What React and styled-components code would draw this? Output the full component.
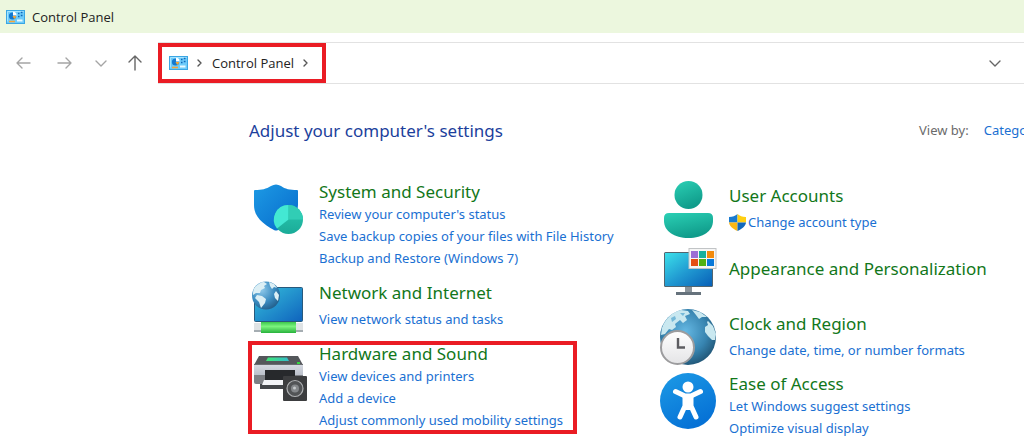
import { useState } from 'react'
import styled, { createGlobalStyle, css } from 'styled-components'

//Styles
const GlobalStyle = createGlobalStyle`
    body {
        margin: 0;
        background: #fff;
        color: #222;
        font-family: "Noto Sans", sans-serif;
        font-size: 13px;
        overflow: hidden;
    }

    * {
        box-sizing: border-box;
    }
`

const highlight = css`
    position: relative;

    &::after {
        content: "";
        position: absolute;
        border: 4px solid #ea1c24;
        pointer-events: none;
    }
`

const TitleBar = styled.header`
    display: flex;
    align-items: center;
    gap: 7px;
    height: 33px;
    padding-left: 6px;
    background: #ecf7de;
    font-family: "Open Sans", sans-serif;
`

const NavBar = styled.nav`
    display: flex;
    align-items: center;
    height: 42px;
    margin-top: 9px;
`

const NavButtons = styled.div`
    display: flex;
    flex-shrink: 0;
    align-items: center;
    gap: 22px;
    width: 158px;
    padding-left: 13px;
`

const NavButton = styled.button`
    display: flex;
    flex-shrink: 0;
    justify-content: center;
    width: ${({ $width }) => $width}px;
    padding: 0;
    border: none;
    background: none;
    color: ${({ $dark }) => ($dark ? '#666' : '#a5a5a5')};

    & > svg {
        flex-shrink: 0;
    }
`

const AddressBar = styled.div`
    display: flex;
    flex: 1;
    align-items: center;
    justify-content: space-between;
    height: 42px;
    padding-right: 21px;
    border: solid #e2e2e2;
    border-width: 1px 0 1px 1px;
`

const Breadcrumb = styled.div`
    ${highlight}
    display: flex;
    align-items: center;
    gap: 9px;
    height: 40px;
    padding: 0 17px 0 10px;
    color: #555;

    &::after {
        inset: 0 0 0 -1px;
    }
`

const Crumb = styled.button`
    padding: 0;
    border: none;
    background: none;
    color: #222;
    font: 13px "Open Sans", sans-serif;
`

const Main = styled.main`
    padding: 33px 0 0 249px;
`

const TopRow = styled.div`
    display: flex;
    align-items: center;
    justify-content: space-between;
    height: 26px;
    margin-right: -64px;
`

const Heading = styled.h1`
    margin: 0;
    color: #1c3f9c;
    font-size: 17px;
    font-weight: 400;
    white-space: nowrap;
`

const ViewBy = styled.div`
    display: flex;
    flex-shrink: 0;
    align-items: center;
    gap: 15px;
    width: 169px;
    color: #6b6b6b;
`

const ViewSelect = styled.select`
    appearance: none;
    padding: 0;
    border: none;
    background: none;
    color: #1a70d2;
    font: inherit;
`

const Columns = styled.div`
    display: grid;
    grid-template-columns: 410px 1fr;
    padding: 38px 0 4px 1px;
`

const Column = styled.div`
    display: flex;
    flex-direction: column;
    align-items: flex-start;
    gap: ${({ $gap }) => $gap}px;
`

const CategoryBox = styled.section`
    display: flex;
    align-items: ${({ $short }) => ($short ? 'center' : 'flex-start')};
    gap: 13px;

    & > svg {
        flex-shrink: 0;
        overflow: visible;
    }

    ${({ $highlighted }) => $highlighted && css`
        ${highlight}

        &::after {
            inset: -2px -14px -3px -2px;
        }
    `}
`

const CategoryTitle = styled.h2`
    margin: 0 0 ${({ $short }) => ($short ? 4 : 0)}px;
    font-size: 17px;
    font-weight: 400;
    line-height: 22px;
    white-space: nowrap;

    & > a {
        color: #12771a;
        text-decoration: none;
    }
`

const TaskList = styled.ul`
    min-height: 4px;
    margin: 0;
    padding: 0;
    list-style: none;
    line-height: 22px;
    white-space: nowrap;
`

const TaskLink = styled.a`
    display: flex;
    align-items: center;
    gap: 2px;
    color: #1a70d2;
    text-decoration: none;
`

//Icons
const PanelIcon = () => (
    <svg width="19" height="14" viewBox="0 0 19 14" aria-hidden="true">
        <rect x=".5" y=".5" width="18" height="13" fill="#6dcbfa" stroke="#3aa6e4" />
        <path d="M1.5 11.5V1.5h16" fill="none" stroke="#a6e4ff" />
        <circle cx="6.5" cy="6" r="3.6" fill="#1479cf" />
        <path d="M7 5.5V1.8a3.7 3.7 0 0 1 3.6 3.7z" fill="#fff" />
        <path d="M6.5 6h3.7a3.6 3.6 0 0 1-2 3z" fill="#f6a531" />
        <path d="M12 3.5h1.5M12 6.5h1.5M14.8 2.5h1.7M14.8 5.5h1.7" stroke="#1067b8" strokeWidth="1.4" />
        <path d="M3 11.5h6" stroke="#f4a63a" strokeWidth="1.5" />
        <path d="M11 10.5h5.5" stroke="#e9faff" strokeWidth="2" />
    </svg>
)

const Arrow = ({ d, width = 16, height = 16, stroke = 1.4 }) => (
    <svg width={width} height={height} viewBox={`0 0 ${width} ${height}`} fill="none" stroke="currentColor"
        strokeWidth={stroke} strokeLinecap="round" strokeLinejoin="round" aria-hidden="true">
        <path d={d} />
    </svg>
)

const Icon = ({ children }) => (
    <svg width="56" height="56" viewBox="0 0 56 56" aria-hidden="true">{children}</svg>
)

const SecurityIcon = () => (
    <Icon>
        <linearGradient id="shield" x1="0" y1="0" x2="1" y2="1">
            <stop offset="0" stopColor="#1d9ae4" />
            <stop offset="1" stopColor="#0669cb" />
        </linearGradient>
        <linearGradient id="pie" x1="0" y1="0" x2="0" y2="1">
            <stop offset="0" stopColor="#2bc9b0" />
            <stop offset="1" stopColor="#1aab98" />
        </linearGradient>
        <path d="M4 10q0-1 1-1c7 0 11-1 16-4q5-3 10 0c4 3 9 4 16 4q1 0 1 1v14c0 12-9 20-20 25q-2 1-4 0C13 43 4 36 4 24z" fill="url(#shield)" />
        <circle cx="38.500" cy="38.500" r="14.500" fill="url(#pie)" />
        <path d="M38.500 38.500V24a14.500 14.500 0 0 0-11.500 23.500z" fill="#43e8d3" />
        <path d="M38.500 38.500V24A14.500 14.500 0 0 1 53 38.500z" fill="#31cdb5" />
    </Icon>
)

const NetworkIcon = () => (
    <Icon>
        <linearGradient id="netScreen" x1="0" y1="0" x2="1" y2="1">
            <stop offset="0" stopColor="#36c0dc" />
            <stop offset="1" stopColor="#0f63bd" />
        </linearGradient>
        <radialGradient id="netGlobe" cx=".35" cy=".3" r=".75">
            <stop offset="0" stopColor="#8fc9ea" />
            <stop offset=".6" stopColor="#3a8bc0" />
            <stop offset="1" stopColor="#235f8b" />
        </radialGradient>
        <linearGradient id="cable" x1="0" y1="0" x2="0" y2="1">
            <stop offset="0" stopColor="#3cc84c" />
            <stop offset=".4" stopColor="#7cf47e" />
            <stop offset="1" stopColor="#28b23c" />
        </linearGradient>
        <g transform="translate(0 1)">
            <rect x="4.500" y="8.500" width="48" height="34" rx="1" fill="url(#netScreen)" stroke="#28597c" />
            <path d="M4 44h49v9H4z" fill="#dfe3e5" />
            <path d="M4 51h49v2H4z" fill="#a5adb2" />
            <path d="M11 43h35v11H11z" fill="url(#cable)" />
            <circle cx="16" cy="16.500" r="14" fill="url(#netGlobe)" />
            <path d="M5 8c3-3 6-5 9-5l3 2-3 2 1 2-4 2-1 3-4 0-3 2c0-3 0-5 2-8zM19 3l5 2 3 4-3-1-2 2-2-3zM7 16l5 1 4 3-1 4-4 5-2-6-4-4zM26 12l3 4-1 6-3-3-1-4z" fill="#dceff5" />
        </g>
    </Icon>
)

const HardwareIcon = () => (
    <Icon>
        <linearGradient id="printer" x1="0" y1="0" x2="0" y2="1">
            <stop offset="0" stopColor="#d8dce4" />
            <stop offset="1" stopColor="#a9aeba" />
        </linearGradient>
        <linearGradient id="scan" x1="0" y1="0" x2="1" y2="0">
            <stop offset="0" stopColor="#3ee874" />
            <stop offset="1" stopColor="#33bdcb" />
        </linearGradient>
        <g transform="translate(0 2)">
            <path d="M9 11h39l5 9H4z" fill="#54575b" />
            <path d="M18 12.500h19l2 3.500H16z" fill="url(#scan)" />
            <path d="M4 19h49v18H4z" fill="url(#printer)" />
            <path d="M4 30h49v7q0 2-2 2H6q-2 0-2-2z" fill="#7d8085" />
            <path d="M4 19.500h49" stroke="#696c71" />
            <path d="M47 17h3v2h-3z" fill="#35d742" />
            <path d="M15 25h30v14H15z" fill="#27292c" />
            <path d="M15 35h30v4H13z" fill="#eceef2" />
            <path d="M10 39h24v5H10z" fill="#43464a" />
            <path d="M14 35h22v5H12z" fill="#f2f4f7" />
            <rect x="33" y="31" width="24" height="25" rx="1" fill="#3c3d3f" />
            <circle cx="45" cy="43.500" r="8" fill="#525456" stroke="#aeb0b2" strokeWidth="1.200" />
            <circle cx="45" cy="43.500" r="4" fill="#85888b" />
            <circle cx="44.500" cy="43" r="1.500" fill="#c5c8ca" />
        </g>
    </Icon>
)

const UserIcon = () => (
    <Icon>
        <linearGradient id="user" x1="0" y1="0" x2=".4" y2="1">
            <stop offset="0" stopColor="#2bd0b5" />
            <stop offset="1" stopColor="#109c8b" />
        </linearGradient>
        <circle cx="28.500" cy="14" r="14" fill="url(#user)" />
        <path d="M9 32h39q5 0 5 5v3c0 10-10 17-24.500 17S4 50 4 40v-3q0-5 5-5z" fill="url(#user)" />
    </Icon>
)

const AppearanceIcon = () => (
    <Icon>
        <linearGradient id="screen" x1="0" y1="0" x2="1" y2="1">
            <stop offset="0" stopColor="#3be0ea" />
            <stop offset=".5" stopColor="#219bd2" />
            <stop offset="1" stopColor="#0860b8" />
        </linearGradient>
        <path d="M25 41h7v7h-7z" fill="#8b949b" />
        <path d="M16 47h25v3H16z" fill="#66727c" />
        <rect x="4" y="7" width="49" height="35" rx="1.500" fill="#52656f" />
        <rect x="5" y="8" width="47" height="33" fill="url(#screen)" />
        <rect x="29" y="3.500" width="27" height="20" fill="#f6f6f6" stroke="#c1c4c6" />
        <path d="M31 6h7v7h-7z" fill="#9b6ed4" />
        <path d="M39 6h7v7h-7z" fill="#16af9d" />
        <path d="M47 6h7v7h-7z" fill="#f28a0c" />
        <path d="M31 14h7v7h-7z" fill="#e44e14" />
        <path d="M39 14h7v7h-7z" fill="#50b112" />
        <path d="M47 14h7v7h-7z" fill="#0878d8" />
    </Icon>
)

const ClockIcon = () => (
    <Icon>
        <radialGradient id="earth" cx=".45" cy=".4" r=".65">
            <stop offset="0" stopColor="#65b8e3" />
            <stop offset=".6" stopColor="#3784b0" />
            <stop offset="1" stopColor="#1e506f" />
        </radialGradient>
        <linearGradient id="face" x1="0" y1="0" x2="0" y2="1">
            <stop offset="0" stopColor="#fff" />
            <stop offset="1" stopColor="#e4e4e6" />
        </linearGradient>
        <circle cx="28" cy="28" r="28" fill="url(#earth)" />
        <path d="M2 19C5 10 12 3 21 1l7 1 2 3-5 2 2 4-4 3-3-3-5 4 1 3-4 3-3-1-4 5-4 1zM32 1l8 2 7 5-5 0-3 2-3-4zM48 12l5 5 3 8-1 6-3 0-4-4-3-4 0-5 3-2-1-3z" fill="#c9e8f0" />
        <path d="M11 9l4-2 1 3-4 3zM20 4l5 0-2 3z" fill="#76b9d8" />
        <circle cx="17.500" cy="38.500" r="16.500" fill="url(#face)" stroke="#9c9c9e" strokeWidth="2" />
        <path d="M18 29v9.500h7" fill="none" stroke="#5d5d61" strokeWidth="2.400" />
    </Icon>
)

const AccessIcon = () => (
    <Icon>
        <linearGradient id="access" x1="0" y1="0" x2=".5" y2="1">
            <stop offset="0" stopColor="#1d9be6" />
            <stop offset="1" stopColor="#0672d6" />
        </linearGradient>
        <circle cx="28" cy="28" r="28" fill="url(#access)" />
        <circle cx="28" cy="14" r="5.500" fill="#fff" />
        <path d="M15.500 18.500L25 23h6l9.500-4.500" fill="none" stroke="#fff" strokeWidth="5" strokeLinecap="round" strokeLinejoin="round" />
        <path d="M25 24v9l-5 11M31 24v9l5 11" fill="none" stroke="#fff" strokeWidth="5" strokeLinecap="round" strokeLinejoin="round" />
        <path d="M23 22h10v13h-2l-1 2h-4l-1-2h-2z" fill="#fff" />
    </Icon>
)

const ShieldIcon = () => (
    <svg width="17" height="17" viewBox="0 0 17 17" aria-hidden="true">
        <clipPath id="uac">
            <path d="M0 3c4 0 6-1 8.500-3C11 2 13 3 17 3v5c0 4-4 7-8.500 9C4 15 0 12 0 8z" />
        </clipPath>
        <g clipPath="url(#uac)">
            <path d="M0 0h8.500v8.500H0z" fill="#1a7bd0" />
            <path d="M8.500 0H17v8.500H8.500z" fill="#ffcf12" />
            <path d="M0 8.500h8.500V17H0z" fill="#fdb813" />
            <path d="M8.500 8.500H17V17H8.500z" fill="#1268bd" />
        </g>
    </svg>
)

//Data
const leftCategories = [
    {
        title: 'System and Security',
        icon: <SecurityIcon />,
        tasks: [
            "Review your computer's status",
            'Save backup copies of your files with File History',
            'Backup and Restore (Windows 7)',
        ],
    },
    {
        title: 'Network and Internet',
        icon: <NetworkIcon />,
        tasks: ['View network status and tasks'],
    },
    {
        title: 'Hardware and Sound',
        icon: <HardwareIcon />,
        tasks: ['View devices and printers', 'Add a device', 'Adjust commonly used mobility settings'],
        highlighted: true,
    },
]

const rightCategories = [
    {
        title: 'User Accounts',
        icon: <UserIcon />,
        tasks: ['Change account type'],
        admin: true,
    },
    {
        title: 'Appearance and Personalization',
        icon: <AppearanceIcon />,
        tasks: [],
    },
    {
        title: 'Clock and Region',
        icon: <ClockIcon />,
        tasks: ['Change date, time, or number formats'],
    },
    {
        title: 'Ease of Access',
        icon: <AccessIcon />,
        tasks: ['Let Windows suggest settings', 'Optimize visual display'],
    },
]

//Components
const Category = ({ title, icon, tasks, highlighted, admin }) => {
    const short = tasks.length < 2

    return (
        <CategoryBox $short={short} $highlighted={highlighted}>
            {icon}
            <div>
                <CategoryTitle $short={short}><a href="#">{title}</a></CategoryTitle>
                <TaskList>
                    {tasks.map(task => (
                        <li key={task}>
                            <TaskLink href="#">
                                {admin && <ShieldIcon />}
                                {task}
                            </TaskLink>
                        </li>
                    ))}
                </TaskList>
            </div>
        </CategoryBox>
    )
}

const App = () => {
    const [view, setView] = useState('category')

    return (
        <>
            <GlobalStyle />
            <TitleBar>
                <PanelIcon />
                <span>Control Panel</span>
            </TitleBar>
            <NavBar>
                <NavButtons>
                    <NavButton $width={20} aria-label="Back">
                        <Arrow d="M15 8H2M7 3L2 8l5 5" />
                    </NavButton>
                    <NavButton $width={20} aria-label="Forward">
                        <Arrow d="M1 8h13M9 3l5 5-5 5" />
                    </NavButton>
                    <NavButton $width={8} aria-label="Recent locations">
                        <Arrow d="M1 1l5 5 5-5" width={12} height={7} />
                    </NavButton>
                    <NavButton $width={16} $dark aria-label="Up">
                        <Arrow d="M8 15V1M2 7l6-6 6 6" />
                    </NavButton>
                </NavButtons>
                <AddressBar>
                    <Breadcrumb>
                        <PanelIcon />
                        <Arrow d="M1 1l3 3-3 3" width={6} height={8} />
                        <Crumb>Control Panel</Crumb>
                        <Arrow d="M1 1l3 3-3 3" width={6} height={8} />
                    </Breadcrumb>
                    <NavButton $width={16} $dark aria-label="Previous locations">
                        <Arrow d="M1 1l5 5 5-5" width={12} height={7} />
                    </NavButton>
                </AddressBar>
            </NavBar>
            <Main>
                <TopRow>
                    <Heading>Adjust your computer's settings</Heading>
                    <ViewBy>
                        <label htmlFor="view">View by:</label>
                        <ViewSelect id="view" value={view} onChange={(e) => setView(e.target.value)}>
                            <option value="category">Category</option>
                            <option value="large">Large icons</option>
                            <option value="small">Small icons</option>
                        </ViewSelect>
                    </ViewBy>
                </TopRow>
                <Columns>
                    <Column $gap={9}>
                        {leftCategories.map(data => <Category key={data.title} {...data} />)}
                    </Column>
                    <Column $gap={8}>
                        {rightCategories.map(data => <Category key={data.title} {...data} />)}
                    </Column>
                </Columns>
            </Main>
        </>
    )
}

export default App
